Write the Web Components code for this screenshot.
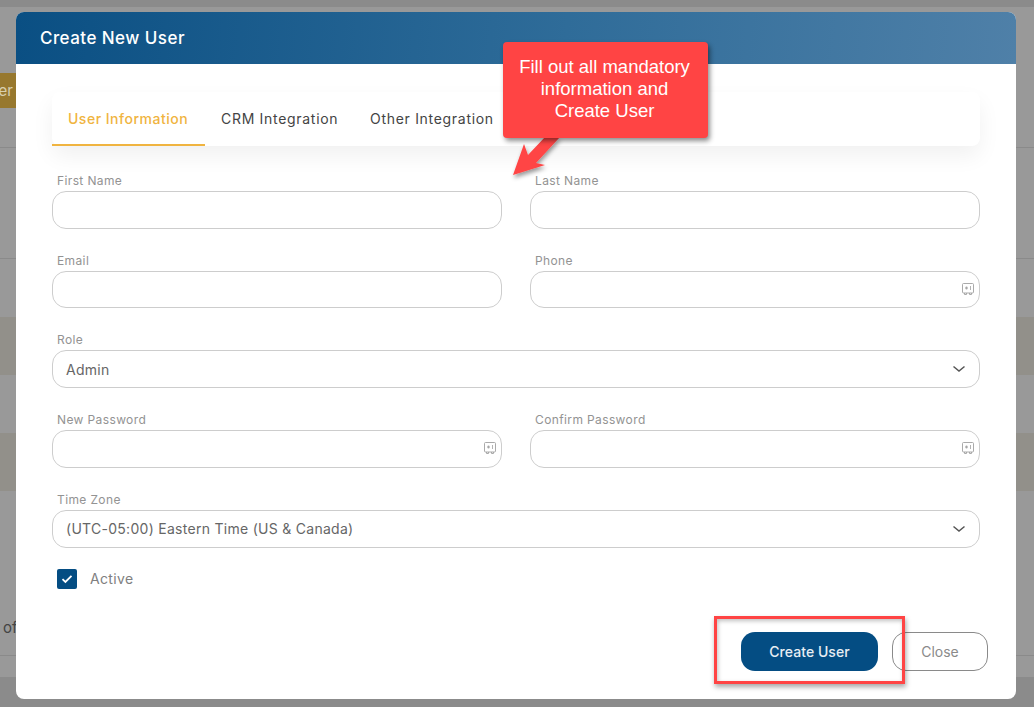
<!DOCTYPE html>
<html>
<head>
<meta charset="utf-8">
<title>Create New User</title>
<style>
    html, body { margin: 0; height: 707px; overflow: hidden; background: #999; }
    body { position: relative; font-family: Inter, "Open Sans", sans-serif; }
</style>
</head>
<body>
<page-backdrop></page-backdrop>
<user-modal title="Create New User">
    <tab-bar></tab-bar>
    <form-grid>
        <form-field label="First Name"></form-field>
        <form-field label="Last Name"></form-field>
        <form-field label="Email"></form-field>
        <form-field label="Phone" icon="key"></form-field>
        <form-field label="Role" value="Admin" select wide></form-field>
        <form-field label="New Password" icon="key"></form-field>
        <form-field label="Confirm Password" icon="key"></form-field>
        <form-field label="Time Zone" value="(UTC-05:00) Eastern Time (US &amp; Canada)" select wide></form-field>
    </form-grid>
    <active-check>Active</active-check>
    <modal-actions></modal-actions>
</user-modal>
<callout-note></callout-note>

<template id="backdrop-tpl">
    <style>
        :host { position: absolute; inset: 0; display: flex; flex-direction: column; background: #999; overflow: hidden;
            font-family: Inter, sans-serif; color: #444; font-size: 15px; }
        .band { flex: none; box-sizing: border-box; }
        .top { height: 7px; background: #8b8b8b; }
        .gold { height: 35px; margin-top: 66px; width: 16px; padding-right: 3px; background: #97782e; color: #d8cfae; line-height: 35px; display: flex; justify-content: flex-end; overflow: hidden; white-space: nowrap; }
        .rule { border-bottom: 1px solid #8a8a8a; }
        .beige { background: #92908a; height: 58px; }
        .foot { position: absolute; left: 0; right: 0; top: 677px; bottom: 0; background: #8b8b8b; }
        .of { height: 20px; line-height: 20px; padding-left: 3px; }
    </style>
    <div class="band top"></div>
    <div class="band gold">er</div>
    <div class="band rule" style="height:40px"></div>
    <div class="band rule" style="height:111px"></div>
    <div class="band" style="height:58px"></div>
    <div class="band beige"></div>
    <div class="band" style="height:58px"></div>
    <div class="band beige"></div>
    <div class="band" style="height:127px"></div>
    <div class="band of">of</div>
    <div class="band rule" style="height:18px"></div>
    <div class="foot"></div>
</template>

<template id="modal-tpl">
    <style>
        :host { position: absolute; left: 16px; top: 12px; width: 1000px; height: 687px; display: block;
            background: #fff; border-radius: 8px; overflow: hidden; font-family: Inter, sans-serif; }
        header { height: 52px; box-sizing: border-box; padding-left: 24px; display: flex; align-items: center;
            background: linear-gradient(95deg, #0a4f83 0%, #2f6c99 55%, #4f80a8 100%);
            color: #fff; font-size: 17px; letter-spacing: .45px; font-weight: 500; }
        main { position: relative; padding: 28px 36px 0; height: 635px; box-sizing: border-box; }
    </style>
    <header id="title"></header>
    <main><slot></slot></main>
</template>

<template id="tabs-tpl">
    <style>
        :host { display: flex; height: 54px; background: #fff; border-radius: 8px; box-shadow: 0 10px 22px rgba(0,0,0,.06);
            font-family: Inter, sans-serif; font-size: 14px; letter-spacing: .7px; color: #444; margin-bottom: 25.2px; }
        div { box-sizing: border-box; height: 54px; line-height: 54px; padding: 0 16px; white-space: nowrap; }
        .on { width: 153px; color: #f0b440; border-bottom: 2px solid #f0b440; font-weight: 500; letter-spacing: .5px; }
        .crm { width: 149px; }
    </style>
    <div class="on">User Information</div>
    <div class="crm">CRM Integration</div>
    <div>Other Integration</div>
</template>

<template id="grid-tpl">
    <style>
        :host { display: grid; grid-template-columns: 450px 450px; column-gap: 28px; row-gap: 22px; }
    </style>
    <slot></slot>
</template>

<template id="field-tpl">
    <style>
        :host { display: block; font-family: Inter, sans-serif; }
        :host([wide]) { grid-column: 1 / -1; }
        label { display: block; height: 20px; line-height: 20px; padding-left: 5px; font-size: 12px; letter-spacing: .38px; color: #939393; }
        .box { height: 37.6px; box-sizing: border-box; border: 1px solid #cdcdcd; border-radius: 14px; display: flex; align-items: center;
            justify-content: space-between; padding: 0 13px; color: #666; font-size: 14px; letter-spacing: .28px; background: #fff; }
        :host(:last-child) .box { height: 38px; }
        svg { display: block; flex: none; }
        .key { margin-right: -8.5px; margin-top: -1px; }
        .chev { margin-right: 1px; }
    </style>
    <label id="lab"></label>
    <div class="box" id="box"><span id="val"></span></div>
</template>

<template id="check-tpl">
    <style>
        :host { display: flex; align-items: center; gap: 13px; margin: 21.2px 0 0 5px; height: 20px;
            font-family: Inter, sans-serif; font-size: 14px; letter-spacing: .35px; color: #808080; }
        .mark { width: 20px; height: 20px; border-radius: 2px; background: #044d83; display: flex; align-items: center; justify-content: center; }
    </style>
    <div class="mark">
        <svg width="12" height="10" viewBox="0 0 12 10"><path d="M1.5 5.2 4.4 8 10.5 1.8" fill="none" stroke="#fff" stroke-width="1.8"/></svg>
    </div>
    <slot></slot>
</template>

<template id="actions-tpl">
    <style>
        :host { position: absolute; right: 28px; top: 568px; display: flex; gap: 14px; font-family: Inter, sans-serif; font-size: 14px; }
        div { box-sizing: border-box; height: 39px; border-radius: 14px; display: flex; align-items: center; justify-content: center; }
        .create { width: 137px; background: #044d83; color: #e8eef3; font-weight: 500; letter-spacing: .05px; }
        .close { width: 96px; border: 1px solid #8a8a8a; color: #8a8a8a; background: #fff; }
    </style>
    <div class="create">Create User</div>
    <div class="close">Close</div>
</template>

<template id="callout-tpl">
    <style>
        :host { position: absolute; inset: 0; display: block; pointer-events: none; font-family: "Liberation Sans", Arial, sans-serif; }
        .note { position: absolute; left: 503px; top: 42px; width: 205px; height: 96px; box-sizing: border-box; padding: 14px 2px 0 0; background: #ff4444; border-radius: 4px;
            color: #fff; font-size: 18.5px; line-height: 22px; text-align: center; box-shadow: 2px 3px 5px rgba(0,0,0,.45); }
        svg { position: absolute; left: 0; top: 0; }
        .frame { position: absolute; left: 714px; top: 616px; width: 191px; height: 68px; box-sizing: border-box; border: 3px solid #ff4444;
            box-shadow: 1px 3px 5px rgba(0,0,0,.35), inset 1px 2px 4px rgba(0,0,0,.25); }
    </style>
    <svg width="1034" height="707">
        <defs><filter id="s" x="-30%" y="-30%" width="170%" height="170%"><feDropShadow dx="1" dy="3" stdDeviation="2" flood-opacity=".4"/></filter></defs>
        <path d="M513 175 L524 144 L528 155 L545 137 L560 137 L536 163 L545 165 Z" fill="#ff4444" filter="url(#s)"/>
    </svg>
    <div class="note">Fill out all mandatory<br>information and<br>Create User</div>
    <div class="frame"></div>
</template>

<script>
    function shadowFrom(el, id) {
        const root = el.attachShadow({ mode: 'open' });
        root.appendChild(document.getElementById(id).content.cloneNode(true));
        return root;
    }

    class PageBackdrop extends HTMLElement {
        constructor() { super(); shadowFrom(this, 'backdrop-tpl'); }
    }

    class UserModal extends HTMLElement {
        constructor() { super(); shadowFrom(this, 'modal-tpl'); }
        connectedCallback() {
            this.shadowRoot.getElementById('title').textContent = this.getAttribute('title');
            this.removeAttribute('title');
        }
    }

    class TabBar extends HTMLElement {
        constructor() { super(); shadowFrom(this, 'tabs-tpl'); }
    }

    class FormGrid extends HTMLElement {
        constructor() { super(); shadowFrom(this, 'grid-tpl'); }
    }

    const KEY_ICON = '<svg class="key" width="14" height="14" viewBox="0 0 14 14" fill="none" stroke="#a0a0a0" stroke-width=".9"><path d="M2.5 1.5h9a1 1 0 0 1 1 1v7.5a1 1 0 0 1-1 1h-9a1 1 0 0 1-1-1V2.500a1 1 0 0 1 1-1Z"/><path d="M3.5 11v1.5h2V11M8.5 11v1.5h2V11"/><path d="M5.5 4.5v3M4.2 5.2l2.6 1.600M6.800 5.200 4.200 6.800M9.500 4v4" stroke-width=".8"/></svg>';
    const CHEVRON = '<svg class="chev" width="12" height="8" viewBox="0 0 12 8" fill="none" stroke="#555" stroke-width="1.5"><path d="M.5 1.500 6 6l5.500-4.500"/></svg>';

    class FormField extends HTMLElement {
        constructor() { super(); shadowFrom(this, 'field-tpl'); }
        connectedCallback() {
            const root = this.shadowRoot;
            root.getElementById('lab').textContent = this.getAttribute('label');
            root.getElementById('val').textContent = this.getAttribute('value') || '';
            const box = root.getElementById('box');
            if (this.hasAttribute('select')) box.insertAdjacentHTML('beforeend', CHEVRON);
            if (this.getAttribute('icon') === 'key') box.insertAdjacentHTML('beforeend', KEY_ICON);
        }
    }

    class ActiveCheck extends HTMLElement {
        constructor() { super(); shadowFrom(this, 'check-tpl'); }
    }

    class ModalActions extends HTMLElement {
        constructor() { super(); shadowFrom(this, 'actions-tpl'); }
    }

    class CalloutNote extends HTMLElement {
        constructor() { super(); shadowFrom(this, 'callout-tpl'); }
    }

    customElements.define('page-backdrop', PageBackdrop);
    customElements.define('user-modal', UserModal);
    customElements.define('tab-bar', TabBar);
    customElements.define('form-grid', FormGrid);
    customElements.define('form-field', FormField);
    customElements.define('active-check', ActiveCheck);
    customElements.define('modal-actions', ModalActions);
    customElements.define('callout-note', CalloutNote);
</script>
</body>
</html>
